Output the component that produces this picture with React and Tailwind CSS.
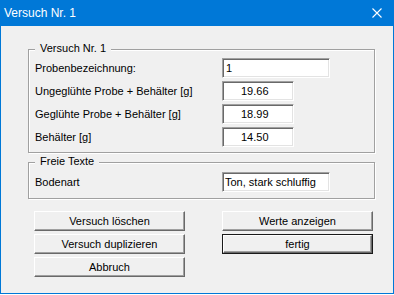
import React from 'react';

const font = { fontFamily: '"Liberation Sans", Arial, sans-serif' };

// sunken edit field
const Feld = ({ width, value, className = '' }) => (
    <div
        className={`h-[20px] bg-white border border-t-[#a0a0a0] border-l-[#a0a0a0] border-r-white border-b-white shadow-[inset_1px_1px_0_#696969,inset_-1px_-1px_0_#e3e3e3] flex items-center text-[11px] leading-none text-black ${width} ${className}`}
    >
        {value}
    </div>
);

const Zeile = ({ label, children }) => (
    <div className="flex items-center h-[20px]">
        <div className="w-[187px] text-[11px] text-black">{label}</div>
        {children}
    </div>
);

const Gruppe = ({ title, className = '', children }) => (
    <div className={`relative w-[347px] border border-[#a0a0a0] shadow-[inset_1px_1px_0_#ffffff,1px_1px_0_#ffffff] pl-[6px] ${className}`}>
        <div className="absolute left-[6px] top-[-8px] px-[5px] bg-[#f0f0f0] text-[11px] leading-[13px] text-black">{title}</div>
        {children}
    </div>
);

const Knopf = ({ children }) => (
    <div className="w-[151px] h-[20px] bg-[#f0f0f0] border border-t-white border-l-white border-r-[#696969] border-b-[#696969] shadow-[inset_-1px_-1px_0_#a0a0a0] flex items-center justify-center text-[11px] text-black">
        {children}
    </div>
);

export default function App() {
    return (
        <div className="w-[394px] h-[295px] bg-white" style={font}>
            <div className="w-[394px] h-[294px] flex flex-col border border-t-0 border-[#0078d7] bg-[#f0f0f0]">
                {/* Titelleiste */}
                <div className="h-[26px] bg-[#0078d7] flex items-center pl-[3px] text-white text-[12px]">
                    <span>Versuch Nr. 1</span>
                    <svg className="ml-auto mr-[11px]" width="10" height="10" viewBox="0 0 10 10">
                        <path d="M0.5 0.5 L9.5 9.5 M9.5 0.5 L0.5 9.5" stroke="#ffffff" strokeWidth="1.1" />
                    </svg>
                </div>

                <div className="pl-[27px] pt-[23px]">
                    <Gruppe title="Versuch Nr. 1" className="h-[104px] pt-[8px]">
                        <div className="flex flex-col gap-[3px]">
                            <Zeile label="Probenbezeichnung:">
                                <Feld width="w-[108px]" value="1" className="pl-[3px]" />
                            </Zeile>
                            <Zeile label="Ungeglühte Probe + Behälter [g]">
                                <Feld width="w-[72px]" value="19.66" className="pl-[18px]" />
                            </Zeile>
                            <Zeile label="Geglühte Probe + Behälter [g]">
                                <Feld width="w-[72px]" value="18.99" className="pl-[18px]" />
                            </Zeile>
                            <Zeile label="Behälter [g]">
                                <Feld width="w-[72px]" value="14.50" className="pl-[18px]" />
                            </Zeile>
                        </div>
                    </Gruppe>

                    <Gruppe title="Freie Texte" className="mt-[9px] h-[37px] pt-[9px]">
                        <Zeile label="Bodenart">
                            <Feld width="w-[108px]" value="Ton, stark schluffig" className="pl-[2px]" />
                        </Zeile>
                    </Gruppe>

                    <div className="flex mt-[12px] pl-[6px] gap-[37px]">
                        <div className="flex flex-col gap-[3px]">
                            <Knopf>Versuch löschen</Knopf>
                            <Knopf>Versuch duplizieren</Knopf>
                            <Knopf>Abbruch</Knopf>
                        </div>
                        <div className="flex flex-col gap-[3px]">
                            <Knopf>Werte anzeigen</Knopf>
                            <div className="w-[151px] h-[20px] border border-[#1a1a1a] flex">
                                <div className="flex-1 bg-[#f0f0f0] border border-t-white border-l-white border-r-[#696969] border-b-[#696969] shadow-[inset_-1px_-1px_0_#a0a0a0] flex items-center justify-center text-[11px] text-black">
                                    fertig
                                </div>
                            </div>
                        </div>
                    </div>
                </div>
            </div>
        </div>
    );
}
